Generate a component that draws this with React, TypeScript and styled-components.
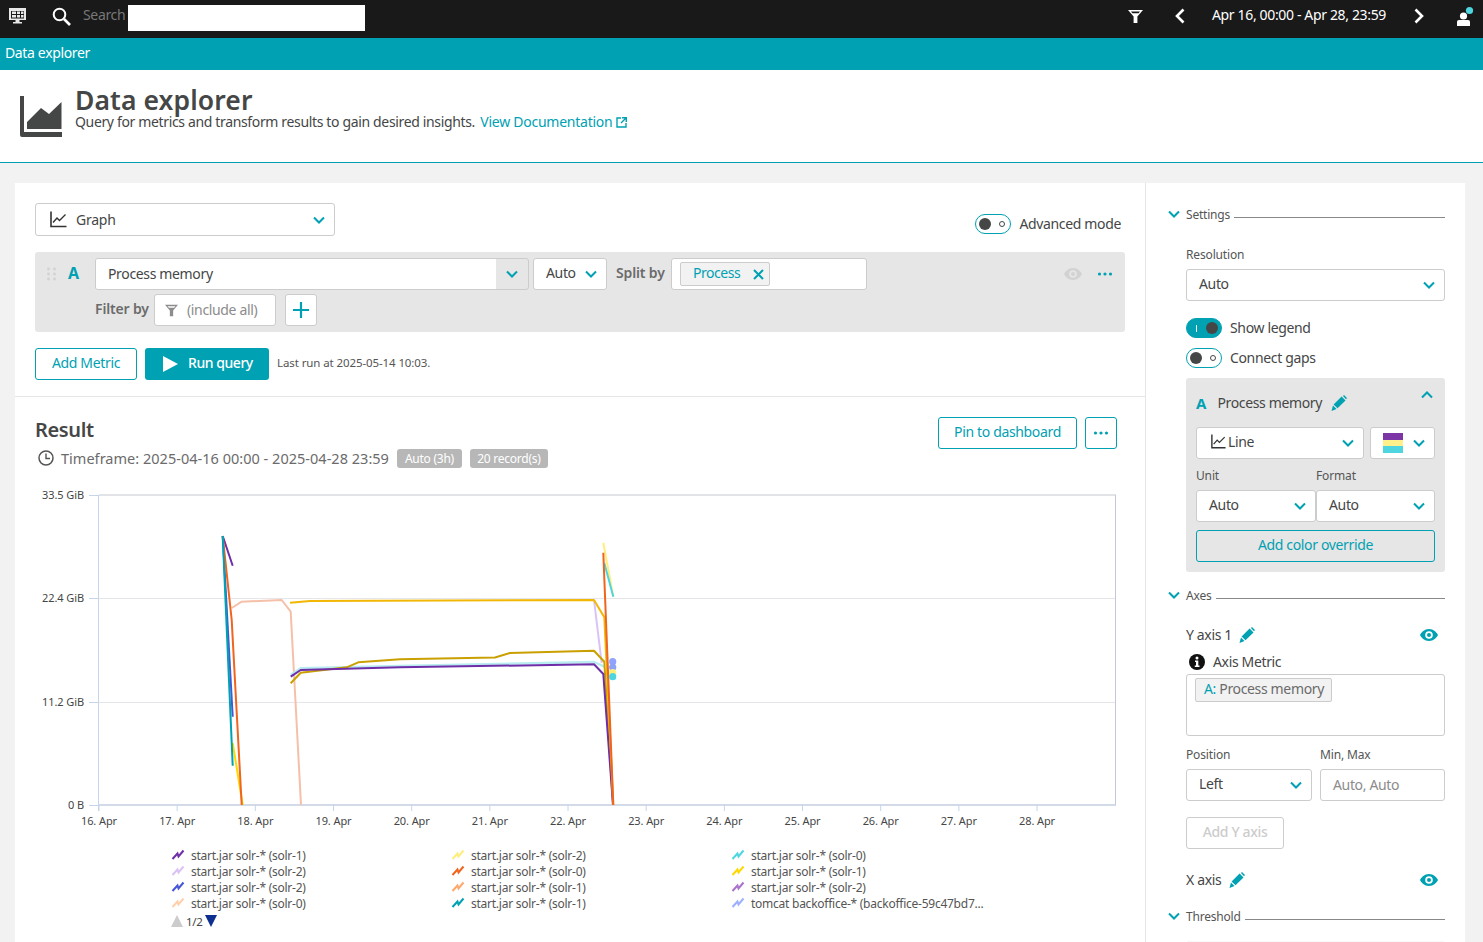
import React from "react";
import styled, { createGlobalStyle } from "styled-components";

const TEAL = "#00a1b2";
const FONT = `"Noto Sans", "Open Sans", sans-serif`;

const Global = createGlobalStyle`
  html, body { margin: 0; height: 100%; overflow: hidden; background: #f2f2f2; }
  * { box-sizing: border-box; }
  body { font-family: ${FONT}; font-size: 14px; color: #454646; }
`;

const Page = styled.div`
  width: 1483px;
  height: 942px;
  overflow: hidden;
  display: flex;
  flex-direction: column;
  letter-spacing: -0.35px;
`;

const TopBar = styled.div`
  height: 38px;
  background: #191919;
  display: flex;
  align-items: center;
  flex: none;
  padding-bottom: 6px;
`;
const TopIcon = styled.span<{ $ml: number }>`
  display: flex;
  margin-left: ${(p) => p.$ml}px;
`;
const SearchLabel = styled.span`
  margin-left: 12px;
  padding-bottom: 3px;
  color: #777;
  font-size: 14px;
  width: 45px;
`;
const SearchInput = styled.div`
  width: 237px;
  height: 26px;
  margin-top: 4px;
  background: #fff;
`;
const DateText = styled.span`
  margin-left: 26px;
  padding-bottom: 3px;
  width: 176px;
  color: #fff;
  font-size: 14px;
  white-space: nowrap;
`;
const Grow = styled.div`
  flex: 1;
`;

const AppBar = styled.div`
  height: 32px;
  flex: none;
  background: ${TEAL};
  color: #fff;
  display: flex;
  align-items: center;
  padding: 0 5px 4px;
  font-size: 14px;
`;

const Header = styled.div`
  height: 93px;
  flex: none;
  background: #fff;
  border-bottom: 1px solid ${TEAL};
  display: flex;
  align-items: flex-start;
  padding: 26px 0 0 20px;
`;
const HeaderText = styled.div`
  margin-left: 13px;
  margin-top: -9px;
`;
const Title = styled.h1`
  margin: 0;
  font-size: 26.5px;
  line-height: 26px;
  font-weight: 600;
  letter-spacing: 0.1px;
  color: #454646;
`;
const Subtitle = styled.div`
  font-size: 14px;
  line-height: 14px;
  margin-top: 2px;
  display: flex;
  align-items: center;
  white-space: pre;
`;
const Link = styled.a`
  color: ${TEAL};
  display: inline-flex;
  align-items: center;
  gap: 4px;
  margin-left: 2px;
  letter-spacing: -0.25px;
`;

const Content = styled.div`
  flex: 1;
  display: flex;
  padding: 20px 18px 0 15px;
  min-height: 0;
`;
const Main = styled.main`
  width: 1131px;
  background: #fff;
  border-right: 1px solid #e6e6e6;
  flex: none;
`;
const Side = styled.aside`
  width: 319px;
  background: #fff;
  flex: none;
  padding: 25px 20px 0 22px;
`;

const QuerySection = styled.section`
  height: 214px;
  padding: 20px 20px 0;
  border-bottom: 1px solid #e6e6e6;
`;
const ControlRow = styled.div`
  display: flex;
  justify-content: space-between;
  align-items: flex-start;
  height: 33px;
  margin-bottom: 16px;
`;
const Field = styled.div<{ $w: number; $h?: number; $pl?: number; $mt?: number; $ml?: number }>`
  width: ${(p) => p.$w}px;
  height: ${(p) => p.$h ?? 32}px;
  margin-top: ${(p) => p.$mt ?? 0}px;
  margin-left: ${(p) => p.$ml ?? 0}px;
  flex: none;
  background: #fff;
  border: 1px solid #ccc;
  border-radius: 3px;
  display: flex;
  align-items: center;
  padding: 0 9px 0 ${(p) => p.$pl ?? 12}px;
  font-size: 14px;
  color: #454646;
  white-space: nowrap;
`;
const FieldText = styled.span`
  flex: 1;
  padding-bottom: 3px;
`;
const GraphText = styled.span`
  flex: 1;
  margin-left: 9px;
  letter-spacing: -0.25px;
`;
const Hint = styled.span`
  color: #8c8c8c;
  flex: 1;
  padding-bottom: 1px;
`;
const ToggleRow = styled.div<{ $mt?: number }>`
  display: flex;
  align-items: center;
  gap: 8px;
  height: 20px;
  margin-top: ${(p) => p.$mt ?? 0}px;
`;
const ToggleText = styled.span`
  padding-bottom: 2px;
`;
const ToggleTrack = styled.span<{ $on?: boolean }>`
  width: 36px;
  height: 20px;
  flex: none;
  border-radius: 10px;
  border: 1px solid ${TEAL};
  background: ${(p) => (p.$on ? TEAL : "#fff")};
  display: flex;
  align-items: center;
  justify-content: space-between;
  flex-direction: ${(p) => (p.$on ? "row-reverse" : "row")};
  padding: 0 ${(p) => (p.$on ? "3px" : "5px")} 0 3px;
`;
const Knob = styled.span`
  width: 12px;
  height: 12px;
  border-radius: 50%;
  background: #454646;
`;
const Ring = styled.span`
  width: 6px;
  height: 6px;
  border-radius: 50%;
  border: 1px solid #454646;
`;
const Bar = styled.span`
  width: 1px;
  height: 7px;
  background: #fff;
  margin-left: 6px;
`;
const AdvancedWrap = styled.div`
  margin-top: 11px;
  margin-right: 4px;
`;

const QueryPanel = styled.div`
  height: 80px;
  background: #e6e6e6;
  border-radius: 3px;
  padding-top: 6px;
  margin-bottom: 16px;
`;
const QRow = styled.div`
  display: flex;
  align-items: center;
  height: 32px;
`;
const QRow2 = styled(QRow)`
  margin-top: 4px;
  padding-left: 60px;
`;
const Lead = styled.div`
  width: 60px;
  display: flex;
  align-items: center;
  padding-left: 12px;
  flex: none;
`;
const Letter = styled.span`
  color: ${TEAL};
  font-weight: 700;
  font-size: 16px;
  letter-spacing: 0;
  margin-left: 12px;
  padding-bottom: 3px;
`;
const MetricSelect = styled.div`
  width: 434px;
  height: 32px;
  flex: none;
  display: flex;
  border: 1px solid #ccc;
  border-radius: 3px;
  overflow: hidden;
`;
const MetricValue = styled.div`
  width: 400px;
  background: #fff;
  display: flex;
  align-items: center;
  padding: 0 0 2px 12px;
`;
const MetricCaret = styled.div`
  flex: 1;
  display: flex;
  align-items: center;
  justify-content: center;
`;
const BoldLabel = styled.span`
  font-weight: 600;
  color: #6b6b6b;
  letter-spacing: -0.15px;
  padding-bottom: 3px;
`;
const SplitLabel = styled(BoldLabel)`
  margin: 0 5px 0 9px;
  width: 50px;
  white-space: nowrap;
`;
const FilterLabel = styled(BoldLabel)`
  width: 59px;
  white-space: nowrap;
`;
const SplitField = styled(Field)`
  padding-left: 8px;
`;
const ProcessTag = styled.div`
  width: 90px;
  height: 24px;
  background: #f2f2f2;
  border: 1px solid #ccc;
  border-radius: 2px;
  display: flex;
  align-items: center;
  justify-content: space-between;
  padding: 0 5px 3px 12px;
  color: ${TEAL};
  letter-spacing: -0.45px;
`;
const TagX = styled.svg`
  margin-top: 3px;
`;
const PanelActions = styled.div`
  margin-left: auto;
  margin-right: 12px;
  display: flex;
  align-items: center;
  gap: 15px;
`;
const FilterIconWrap = styled.span`
  display: flex;
  margin-right: 9px;
`;
const PlusButton = styled.div`
  width: 32px;
  height: 32px;
  margin-left: 9px;
  flex: none;
  background: #fff;
  border: 1px solid #ccc;
  border-radius: 3px;
  display: flex;
  align-items: center;
  justify-content: center;
`;

const ButtonRow = styled.div`
  display: flex;
  align-items: center;
`;
const ButtonLabel = styled.span`
  padding-bottom: 4px;
`;
const OutlineButton = styled.button<{ $w: number; $ml?: number }>`
  width: ${(p) => p.$w}px;
  height: 32px;
  flex: none;
  margin-left: ${(p) => p.$ml ?? 0}px;
  background: #fff;
  border: 1px solid ${TEAL};
  border-radius: 3px;
  color: ${TEAL};
  font: inherit;
  letter-spacing: inherit;
  font-size: 14px;
  padding: 0;
  display: flex;
  align-items: center;
  justify-content: center;
`;
const RunButton = styled.button`
  width: 124px;
  height: 32px;
  margin-left: 8px;
  background: ${TEAL};
  border: 0;
  border-radius: 3px;
  color: #fff;
  font: inherit;
  letter-spacing: -0.45px;
  font-weight: 500;
  display: flex;
  align-items: center;
  padding: 0 0 0 18px;
  gap: 10px;
`;
const LastRun = styled.span`
  margin-left: 8px;
  padding-bottom: 4px;
  font-size: 11.5px;
  letter-spacing: -0.1px;
  color: #555;
`;

const ResultHead = styled.div`
  height: 88px;
  padding: 20px 28px 0 20px;
  display: flex;
  justify-content: space-between;
  align-items: flex-start;
`;
const ResultTitle = styled.h2`
  margin: 0;
  font-size: 20px;
  line-height: 26px;
  font-weight: 600;
  color: #454646;
`;
const TimeRow = styled.div`
  display: flex;
  align-items: center;
  height: 20px;
  margin-top: 5px;
  padding-left: 3px;
  color: #6b6b6b;
  font-size: 14.5px;
  letter-spacing: 0.02px;
  white-space: nowrap;
`;
const TimeText = styled.span`
  margin-left: 7px;
`;
const Badge = styled.span<{ $w: number; $ml: number }>`
  width: ${(p) => p.$w}px;
  margin-left: ${(p) => p.$ml}px;
  height: 19px;
  background: #b7b7b7;
  border-radius: 3px;
  color: #fff;
  font-size: 12px;
  letter-spacing: -0.25px;
  display: flex;
  align-items: center;
  justify-content: center;
`;
const HeadActions = styled.div`
  display: flex;
  gap: 8px;
`;

const ChartSvg = styled.svg`
  display: block;
  width: 1130px;
  height: 362px;
  letter-spacing: -0.1px;
`;
const LegendGrid = styled.div`
  padding-left: 156px;
  display: grid;
  grid-template-columns: repeat(3, 280px);
  grid-auto-flow: column;
  grid-template-rows: repeat(4, 16px);
`;
const LegendItem = styled.div`
  display: flex;
  align-items: center;
  gap: 6px;
  font-size: 12px;
  letter-spacing: -0.25px;
  color: #555;
  white-space: nowrap;
`;
const Pager = styled.div`
  padding-left: 156px;
  margin-top: 2px;
  height: 16px;
  display: flex;
  align-items: center;
  gap: 3px;
  font-size: 11.5px;
  color: #454646;
`;

const SectionHead = styled.div<{ $mt?: number }>`
  display: flex;
  align-items: center;
  height: 14px;
  margin-top: ${(p) => p.$mt ?? 0}px;
  padding-bottom: 2px;
  font-size: 12px;
  letter-spacing: -0.2px;
  color: #555;
`;
const HeadLine = styled.span`
  flex: 1;
  height: 1px;
  background: #888;
  margin: 7px 0 0 4px;
`;
const SectionCaret = styled.span`
  display: flex;
  width: 18px;
  flex: none;
`;
const SmallLabel = styled.div<{ $mt?: number }>`
  font-size: 12px;
  line-height: 14px;
  letter-spacing: -0.15px;
  color: #555;
  margin-top: ${(p) => p.$mt ?? 0}px;
`;
const Indented = styled.div`
  padding-left: 18px;
`;
const GreyBox = styled.div`
  margin-top: 10px;
  height: 194px;
  background: #e6e6e6;
  border-radius: 3px;
  padding: 0 10px;
`;
const BoxHead = styled.div`
  height: 49px;
  display: flex;
  align-items: center;
`;
const BoxName = styled.span`
  margin-left: 11px;
`;
const BoxLetter = styled(Letter)`
  margin-left: 0;
  font-size: 15px;
  padding-bottom: 0;
`;
const PencilWrap = styled.span<{ $ml: number }>`
  display: flex;
  margin-left: ${(p) => p.$ml}px;
`;
const UpCaret = styled.span`
  display: flex;
  margin-left: auto;
  margin-right: 2px;
  margin-top: -16px;
`;
const FlexGap = styled.div<{ $gap: number }>`
  display: flex;
  gap: ${(p) => p.$gap}px;
`;
const LineIcon = styled.span`
  display: flex;
  margin: -4px 2px 0 0;
`;
const LabelPair = styled.div<{ $mt?: number }>`
  display: flex;
  margin-top: ${(p) => p.$mt ?? 10}px;
  margin-bottom: 7px;
`;
const LabelCell = styled(SmallLabel)<{ $w: number }>`
  width: ${(p) => p.$w}px;
`;
const Swatch = styled.span`
  width: 20px;
  height: 20px;
  display: flex;
  flex-direction: column;
  flex: 1 0 20px;
  max-width: 20px;
`;
const SwatchBand = styled.span<{ $c: string }>`
  flex: 1;
  background: ${(p) => p.$c};
`;
const SwatchField = styled(Field)`
  justify-content: space-between;
`;
const FullOutline = styled(OutlineButton)`
  margin-top: 8px;
  background: transparent;
`;
const AxisRow = styled.div<{ $mt: number }>`
  display: flex;
  align-items: center;
  height: 20px;
  margin-top: ${(p) => p.$mt}px;
`;
const AxisName = styled.span`
  padding-bottom: 2px;
`;
const EyeWrap = styled.span`
  margin-left: auto;
  margin-right: 7px;
  display: flex;
`;
const MetricInfo = styled.div`
  display: flex;
  align-items: center;
  height: 18px;
  margin-top: 8px;
  padding-left: 3px;
  gap: 8px;
`;
const MetricBox = styled.div`
  height: 62px;
  margin-top: 3px;
  border: 1px solid #ccc;
  border-radius: 3px;
  padding: 3px 8px;
`;
const AxisTag = styled.div`
  width: 137px;
  height: 24px;
  background: #f2f2f2;
  border: 1px solid #ccc;
  border-radius: 2px;
  padding: 0 0 3px 8px;
  display: flex;
  align-items: center;
  white-space: pre;
  font-size: 14px;
  color: #6b6b6b;
`;
const TealText = styled.span`
  color: ${TEAL};
`;
const DisabledButton = styled.div`
  width: 98px;
  height: 32px;
  margin-top: 16px;
  padding-bottom: 3px;
  border: 1px solid #ccc;
  border-radius: 3px;
  color: #ccc;
  display: flex;
  align-items: center;
  justify-content: center;
  font-weight: 500;
`;
const NextBox = styled.div`
  height: 30px;
  margin-top: 17px;
  background: #f7f7f7;
  border-radius: 3px;
`;

const RotSvg = styled.svg<{ $rot: number }>`
  flex: none;
  transform: rotate(${(p) => p.$rot}deg);
`;
const Chevron = ({ rot = 0 }: { rot?: number }) => (
  <RotSvg $rot={rot} width={12} height={12} viewBox="0 0 12 12">
    <path d="M1 3.5 L6 8.5 L11 3.5" fill="none" stroke={TEAL} strokeWidth="2" />
  </RotSvg>
);
const NavChevron = ({ dir }: { dir: "l" | "r" }) => (
  <svg width="12" height="16" viewBox="0 0 12 16">
    <path d={dir === "l" ? "M9.5 1.5 L3 8 L9.5 14.5" : "M2.5 1.5 L9 8 L2.5 14.5"} fill="none" stroke="#fff" strokeWidth="2.6" />
  </svg>
);
const Pencil = () => (
  <svg width="16" height="16" viewBox="0 0 16 16">
    <path d="M10.6 1.5 L14.5 5.4 L6.5 13.3 L2.6 9.5 Z M12 1 L13 0 L16 3 L15 4.2 Z" fill={TEAL} />
    <path d="M2 10.5 L5.5 14 L0.5 16 Z" fill={TEAL} />
  </svg>
);
const Eye = ({ c = TEAL }: { c?: string }) => (
  <svg width="18" height="12" viewBox="0 0 18 12">
    <path fillRule="evenodd" d="M9 0 C13.5 0 16.8 3.6 18 6 C16.8 8.4 13.5 12 9 12 C4.5 12 1.2 8.4 0 6 C1.2 3.6 4.5 0 9 0 Z M9 2.2 A3.8 3.8 0 1 0 9 9.8 A3.8 3.8 0 1 0 9 2.2 Z" fill={c} />
    <circle cx="9" cy="6" r="2" fill={c} />
  </svg>
);
const Dots = () => (
  <svg width="16" height="4" viewBox="0 0 16 4">
    <circle cx="2.5" cy="2" r="1.6" fill={TEAL} />
    <circle cx="8" cy="2" r="1.6" fill={TEAL} />
    <circle cx="13.5" cy="2" r="1.6" fill={TEAL} />
  </svg>
);
const LineChartIcon = ({ w = 17, c = "#333" }: { w?: number; c?: string }) => (
  <svg width={w} height={w} viewBox="0 0 17 17">
    <path d="M1 0.5 V15.5 H16.5" fill="none" stroke={c} strokeWidth="1.6" />
    <path d="M3 11.5 L7 7 L9.5 9.5 L15.5 3.5" fill="none" stroke={c} strokeWidth="1.4" />
  </svg>
);
const FunnelIcon = ({ c = "#fff", w = 15 }: { c?: string; w?: number }) => (
  <svg width={w} height={w} viewBox="0 0 15 15">
    <path fillRule="evenodd" d="M0 1 H15 L9.4 7.6 V14 H5.6 V7.6 Z M3 2.6 L12 2.6 L10.6 4.2 H4.4 Z" fill={c} />
  </svg>
);

const LEGEND: [string, string][] = [
  ["#6f2da8", "start.jar solr-* (solr-1)"],
  ["#d9c3f5", "start.jar solr-* (solr-2)"],
  ["#4556d7", "start.jar solr-* (solr-2)"],
  ["#ffd0ab", "start.jar solr-* (solr-0)"],
  ["#ffee7c", "start.jar solr-* (solr-2)"],
  ["#ef651f", "start.jar solr-* (solr-0)"],
  ["#ffa86c", "start.jar solr-* (solr-1)"],
  ["#00a1b2", "start.jar solr-* (solr-1)"],
  ["#4fd5e0", "start.jar solr-* (solr-0)"],
  ["#ffd800", "start.jar solr-* (solr-1)"],
  ["#a972cc", "start.jar solr-* (solr-2)"],
  ["#9cb0ff", "tomcat backoffice-* (backoffice-59c47bd7..."],
];

const TICKS = ["16. Apr", "17. Apr", "18. Apr", "19. Apr", "20. Apr", "21. Apr", "22. Apr", "23. Apr", "24. Apr", "25. Apr", "26. Apr", "27. Apr", "28. Apr"];
const YS: [number, string][] = [
  [495, "33.5 GiB"],
  [598, "22.4 GiB"],
  [702, "11.2 GiB"],
  [805, "0 B"],
];

const SERIES: [string, string, number][] = [
  ["#f5c0a8", "231.7,608 241.7,601.7 281.7,600 290.7,611.7 301,805", 2],
  ["#d9c3f5", "594,600 601.7,663", 2],
  ["#b8ecf0", "290.7,675 300.7,668.3 400,666 594,662 604.3,666.7", 2.4],
  ["#c9a000", "290.7,683.3 300.7,672.7 346.7,667.3 358.3,662.3 400,659.3 495,657.5 510,653 594,650.7 604.3,661.7 613,805", 2],
  ["#6f2da8", "290.7,676.7 300.7,670 400,667.3 594,664.3 603.3,674 613,805", 2],
  ["#f2b705", "290,602.7 310,601 594,600 604.3,617.3 613.3,805", 2],
  ["#ffee7c", "603.3,542.7 613.3,596.7", 2],
  ["#4fd5e0", "604.3,563 613.3,596.7", 2],
  ["#ffd800", "232.7,743 242.7,805", 2],
  ["#4556d7", "222.7,536 232.7,716.7", 2],
  ["#6f2da8", "222.7,536 232.7,565.7", 2],
  ["#ef651f", "222.7,536 231.7,620 241.7,805", 2],
  ["#00a1b2", "222.7,536 232.7,765.7", 2],
  ["#ef651f", "603.3,552.7 613.3,805", 2],
];

const Chart = () => (
  <ChartSvg viewBox="15 485 1130 362">
    <g stroke="#e4e6ea" strokeWidth="1">
      <line x1="99" x2="1116" y1="598.5" y2="598.5" />
      <line x1="99" x2="1116" y1="702.5" y2="702.5" />
    </g>
    <line x1="99" x2="1116" y1="495" y2="495" stroke="#c5c8d0" />
    <line x1="1115.5" x2="1115.5" y1="495" y2="805" stroke="#c5c8d0" />
    <line x1="99" x2="1116" y1="805" y2="805" stroke="#c5cfe0" strokeWidth="1.5" />
    <line x1="98.5" x2="98.5" y1="495" y2="811" stroke="#c5d5ea" />
    {YS.map(([y, t]) => (
      <g key={t}>
        <line x1="89" x2="99" y1={y + 0.5} y2={y + 0.5} stroke="#c5d5ea" />
        <text x="84" y={y + 4} textAnchor="end" fontSize="11" fill="#454646" fontFamily={FONT}>{t}</text>
      </g>
    ))}
    {TICKS.map((t, i) => {
      const x = 99 + i * 78.17;
      return (
        <g key={t}>
          <line x1={x} x2={x} y1="805" y2="811" stroke="#c5d5ea" />
          <text x={x} y="825" textAnchor="middle" fontSize="11" fill="#454646" fontFamily={FONT}>{t}</text>
        </g>
      );
    })}
    {SERIES.map(([c, pts, w], i) => (
      <polyline key={i} points={pts} fill="none" stroke={c} strokeWidth={w} strokeLinejoin="round" />
    ))}
    <circle cx="612.7" cy="661.7" r="3.6" fill="#8fa3ff" />
    <circle cx="612.7" cy="667.3" r="3.6" fill="#8fa3f5" />
    <circle cx="612.7" cy="672.7" r="3.6" fill="#ffee7c" />
    <circle cx="612.7" cy="676.7" r="3.6" fill="#4fd5e0" />
  </ChartSvg>
);

const LegendMark = ({ c }: { c: string }) => (
  <svg width="14" height="12" viewBox="0 0 14 12">
    <path d="M1.5 10 L6.5 4.5 L7.5 7.5 L12.5 1.5" fill="none" stroke={c} strokeWidth="2" />
  </svg>
);

export default function App() {
  return (
    <Page>
      <Global />
      <TopBar>
        <TopIcon $ml={9}>
          <svg width="17" height="16" viewBox="0 0 17 16">
            <path fillRule="evenodd" d="M0 0 H17 V12 H0 Z M2 3 V10.5 H15 V3 Z" fill="#e8e8e8" />
            <path d="M3 3.5 H7 V6 H3 Z M8 3.5 H11 V6 H8 Z M12 3.5 H14.5 V6 H12 Z M3 7 H7 V9.5 H3 Z M8 7 H11 V9.5 H8 Z M12 7 H14.5 V9.5 H12 Z" fill="#e8e8e8" />
            <path d="M6.5 12 H10.5 V14 H13 V15.5 H4 V14 H6.5 Z" fill="#e8e8e8" />
          </svg>
        </TopIcon>
        <TopIcon $ml={26}>
          <svg width="19" height="19" viewBox="0 0 19 19">
            <circle cx="7.5" cy="7.5" r="5.8" fill="none" stroke="#fff" strokeWidth="2" />
            <path d="M12 12 L18 18" stroke="#fff" strokeWidth="2.6" />
          </svg>
        </TopIcon>
        <SearchLabel>Search</SearchLabel>
        <SearchInput />
        <Grow />
        <FunnelIcon />
        <TopIcon $ml={31}><NavChevron dir="l" /></TopIcon>
        <DateText>Apr 16, 00:00 - Apr 28, 23:59</DateText>
        <TopIcon $ml={25}><NavChevron dir="r" /></TopIcon>
        <TopIcon $ml={32}>
          <svg width="17" height="20" viewBox="0 0 17 20">
            <circle cx="6.5" cy="10" r="3.6" fill="#fff" />
            <path d="M0 20 V15.5 Q0 14 2 14 H11 Q13 14 13 15.5 V20 Z" fill="#fff" />
            <circle cx="12.5" cy="4.5" r="3.6" fill="#4fd5e0" />
          </svg>
        </TopIcon>
        <TopIcon $ml={9} />
      </TopBar>
      <AppBar>Data explorer</AppBar>
      <Header>
        <svg width="42" height="41" viewBox="0 0 42 41">
          <path d="M0 0 H4 V36 H42 V41 H2 Q0 41 0 39 Z" fill="#454646" />
          <path d="M7 26 L21 12 L29 18 L41.5 6 V33 H7 Z" fill="#454646" />
        </svg>
        <HeaderText>
          <Title>Data explorer</Title>
          <Subtitle>
            Query for metrics and transform results to gain desired insights.{" "}
            <Link>
              View Documentation
              <svg width="11" height="11" viewBox="0 0 11 11">
                <path d="M5 1 H1 V10 H10 V6" fill="none" stroke={TEAL} strokeWidth="1.4" />
                <path d="M6 0.7 H10.3 V5 M10 1 L5 6" fill="none" stroke={TEAL} strokeWidth="1.4" />
              </svg>
            </Link>
          </Subtitle>
        </HeaderText>
      </Header>
      <Content>
        <Main>
          <QuerySection>
            <ControlRow>
              <Field $w={300} $h={33} $pl={14}>
                <LineChartIcon />
                <GraphText>Graph</GraphText>
                <Chevron />
              </Field>
              <AdvancedWrap>
                <ToggleRow>
                  <ToggleTrack><Knob /><Ring /></ToggleTrack>
                  <ToggleText>Advanced mode</ToggleText>
                </ToggleRow>
              </AdvancedWrap>
            </ControlRow>
            <QueryPanel>
              <QRow>
                <Lead>
                  <svg width="9" height="14" viewBox="0 0 9 14">
                    {[1.5, 7.5].map((x) => [2, 7, 12].map((y) => <circle key={`${x}${y}`} cx={x} cy={y} r="1.4" fill="#d2d2d2" />))}
                  </svg>
                  <Letter>A</Letter>
                </Lead>
                <MetricSelect>
                  <MetricValue>Process memory</MetricValue>
                  <MetricCaret><Chevron /></MetricCaret>
                </MetricSelect>
                <Field $w={74} $ml={4}>
                  <FieldText>Auto</FieldText>
                  <Chevron />
                </Field>
                <SplitLabel>Split by</SplitLabel>
                <SplitField $w={196}>
                  <ProcessTag>
                    Process
                    <TagX width="11" height="11" viewBox="0 0 11 11">
                      <path d="M1 1 L10 10 M10 1 L1 10" stroke={TEAL} strokeWidth="2" />
                    </TagX>
                  </ProcessTag>
                </SplitField>
                <PanelActions>
                  <Eye c="#d2d2d2" />
                  <Dots />
                </PanelActions>
              </QRow>
              <QRow2>
                <FilterLabel>Filter by</FilterLabel>
                <Field $w={122} $pl={10}>
                  <FilterIconWrap><FunnelIcon c="#8c8c8c" w={13} /></FilterIconWrap>
                  <Hint>(include all)</Hint>
                </Field>
                <PlusButton>
                  <svg width="16" height="16" viewBox="0 0 16 16">
                    <path d="M8 0 V16 M0 8 H16" stroke={TEAL} strokeWidth="2.2" />
                  </svg>
                </PlusButton>
              </QRow2>
            </QueryPanel>
            <ButtonRow>
              <OutlineButton $w={102}><ButtonLabel>Add Metric</ButtonLabel></OutlineButton>
              <RunButton>
                <svg width="15" height="16" viewBox="0 0 15 16"><path d="M0 0 L15 8 L0 16 Z" fill="#fff" /></svg>
                <ButtonLabel>Run query</ButtonLabel>
              </RunButton>
              <LastRun>Last run at 2025-05-14 10:03.</LastRun>
            </ButtonRow>
          </QuerySection>
          <ResultHead>
            <div>
              <ResultTitle>Result</ResultTitle>
              <TimeRow>
                <svg width="16" height="16" viewBox="0 0 16 16">
                  <circle cx="8" cy="8" r="7" fill="none" stroke="#555" strokeWidth="1.5" />
                  <path d="M8 3.5 V8.5 H12" fill="none" stroke="#555" strokeWidth="1.4" />
                </svg>
                <TimeText>Timeframe: 2025-04-16 00:00 - 2025-04-28 23:59</TimeText>
                <Badge $w={65} $ml={8}>Auto (3h)</Badge>
                <Badge $w={78} $ml={8}>20 record(s)</Badge>
              </TimeRow>
            </div>
            <HeadActions>
              <OutlineButton $w={139}><ButtonLabel>Pin to dashboard</ButtonLabel></OutlineButton>
              <OutlineButton $w={32}><Dots /></OutlineButton>
            </HeadActions>
          </ResultHead>
          <Chart />
          <LegendGrid>
            {LEGEND.map(([c, t], i) => (
              <LegendItem key={i}><LegendMark c={c} />{t}</LegendItem>
            ))}
          </LegendGrid>
          <Pager>
            <svg width="12" height="12" viewBox="0 0 12 12"><path d="M6 0 L12 12 H0 Z" fill="#cccccc" /></svg>
            1/2
            <svg width="12" height="12" viewBox="0 0 12 12"><path d="M0 0 H12 L6 12 Z" fill="#0d2f8f" /></svg>
          </Pager>
        </Main>
        <Side>
          <SectionHead>
            <SectionCaret><Chevron /></SectionCaret>
            Settings<HeadLine />
          </SectionHead>
          <Indented>
            <SmallLabel $mt={26}>Resolution</SmallLabel>
            <Field $w={259} $mt={7}>
              <FieldText>Auto</FieldText>
              <Chevron />
            </Field>
            <ToggleRow $mt={17}>
              <ToggleTrack $on><Knob /><Bar /></ToggleTrack>
              <ToggleText>Show legend</ToggleText>
            </ToggleRow>
            <ToggleRow $mt={10}>
              <ToggleTrack><Knob /><Ring /></ToggleTrack>
              <ToggleText>Connect gaps</ToggleText>
            </ToggleRow>
            <GreyBox>
              <BoxHead>
                <BoxLetter>A</BoxLetter>
                <BoxName>Process memory</BoxName>
                <PencilWrap $ml={9}><Pencil /></PencilWrap>
                <UpCaret><Chevron rot={180} /></UpCaret>
              </BoxHead>
              <FlexGap $gap={6}>
                <Field $w={168} $pl={14}>
                  <LineIcon><LineChartIcon w={15} /></LineIcon>
                  <FieldText>Line</FieldText>
                  <Chevron />
                </Field>
                <SwatchField $w={65}>
                  <Swatch>
                    <SwatchBand $c="#7b35a5" />
                    <SwatchBand $c="#fff08a" />
                    <SwatchBand $c="#4fd5e0" />
                  </Swatch>
                  <Chevron />
                </SwatchField>
              </FlexGap>
              <LabelPair>
                <LabelCell $w={120}>Unit</LabelCell>
                <LabelCell $w={119}>Format</LabelCell>
              </LabelPair>
              <FlexGap $gap={0}>
                <Field $w={120}>
                  <FieldText>Auto</FieldText>
                  <Chevron />
                </Field>
                <Field $w={119}>
                  <FieldText>Auto</FieldText>
                  <Chevron />
                </Field>
              </FlexGap>
              <FullOutline $w={239}><ButtonLabel>Add color override</ButtonLabel></FullOutline>
            </GreyBox>
          </Indented>
          <SectionHead $mt={17}>
            <SectionCaret><Chevron /></SectionCaret>
            Axes<HeadLine />
          </SectionHead>
          <Indented>
            <AxisRow $mt={22}>
              <AxisName>Y axis 1</AxisName>
              <PencilWrap $ml={7}><Pencil /></PencilWrap>
              <EyeWrap><Eye /></EyeWrap>
            </AxisRow>
            <MetricInfo>
              <svg width="16" height="16" viewBox="0 0 16 16">
                <circle cx="8" cy="8" r="8" fill="#111" />
                <circle cx="8" cy="4" r="1.5" fill="#fff" />
                <path d="M6 6.5 H9.3 V11.5 H10.5 V13 H5.8 V11.5 H7 V8 H6 Z" fill="#fff" />
              </svg>
              <AxisName>Axis Metric</AxisName>
            </MetricInfo>
            <MetricBox>
              <AxisTag><TealText>A: </TealText>Process memory</AxisTag>
            </MetricBox>
            <LabelPair $mt={12}>
              <LabelCell $w={134}>Position</LabelCell>
              <LabelCell $w={125}>Min, Max</LabelCell>
            </LabelPair>
            <FlexGap $gap={8}>
              <Field $w={126}>
                <FieldText>Left</FieldText>
                <Chevron />
              </Field>
              <Field $w={125}>
                <Hint>Auto, Auto</Hint>
              </Field>
            </FlexGap>
            <DisabledButton>Add Y axis</DisabledButton>
            <AxisRow $mt={21}>
              <AxisName>X axis</AxisName>
              <PencilWrap $ml={8}><Pencil /></PencilWrap>
              <EyeWrap><Eye /></EyeWrap>
            </AxisRow>
          </Indented>
          <SectionHead $mt={20}>
            <SectionCaret><Chevron /></SectionCaret>
            Threshold<HeadLine />
          </SectionHead>
          <Indented><NextBox /></Indented>
        </Side>
      </Content>
    </Page>
  );
}
